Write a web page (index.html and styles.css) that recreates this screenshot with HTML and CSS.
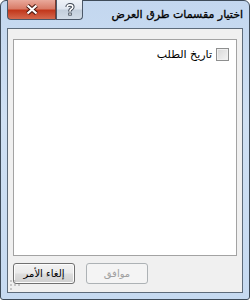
FILE: index.html
```html
<!DOCTYPE html>
<html lang="ar" dir="rtl">
<head>
    <meta charset="UTF-8">
    <title>اختيار مقسمات طرق العرض</title>
    <link rel="stylesheet" href="styles.css">
</head>
<body>
    <div class="window">
        <div class="titlebar">
            <div class="title">اختيار مقسمات طرق العرض</div>
            <div class="caption-buttons">
                <div class="cap-btn help">
                    <svg width="10" height="13" viewBox="0 0 10 13">
                        <path d="M2.2 4 C2.2 1.2 7.8 1.2 7.8 4 C7.8 6 5 6 5 7.8 L5 8.6" fill="none" stroke="#3d4652" stroke-width="3.6"/>
                        <path d="M2.2 4 C2.2 1.2 7.8 1.2 7.8 4 C7.8 6 5 6 5 7.8 L5 8.6" fill="none" stroke="#ffffff" stroke-width="1.6"/>
                        <rect x="3.3" y="9.6" width="3.4" height="3" fill="#3d4652"/>
                        <rect x="4.2" y="10.4" width="1.6" height="1.4" fill="#ffffff"/>
                    </svg>
                </div>
                <div class="cap-btn close">
                    <svg width="14" height="11" viewBox="0 0 14 11">
                        <path d="M2.5 1.5 L11.5 9.5 M11.5 1.5 L2.5 9.5" stroke="#4a1a12" stroke-width="4.2"/>
                        <path d="M2.5 1.5 L11.5 9.5 M11.5 1.5 L2.5 9.5" stroke="#ffffff" stroke-width="2.2"/>
                    </svg>
                </div>
            </div>
        </div>

        <div class="client">
            <div class="listbox">
                <label class="item">
                    <span class="checkbox"></span>
                    <span>تاريخ الطلب</span>
                </label>
            </div>
            <div class="buttons">
                <button class="btn" disabled>موافق</button>
                <button class="btn">إلغاء الأمر</button>
            </div>
            <svg class="grip" width="10" height="10" viewBox="0 0 10 10">
                <rect x="0" y="0" width="2" height="2" fill="#c7c7c7"/>
                <rect x="4" y="0" width="2" height="2" fill="#c7c7c7"/>
                <rect x="0" y="4" width="2" height="2" fill="#c7c7c7"/>
                <rect x="4" y="4" width="2" height="2" fill="#c7c7c7"/>
                <rect x="8" y="4" width="2" height="2" fill="#c7c7c7"/>
                <rect x="0" y="8" width="2" height="2" fill="#c7c7c7"/>
            </svg>
        </div>
    </div>
</body>
</html>
```

FILE: styles.css
```css
html, body {
    margin: 0;
    padding: 0;
    width: 250px;
    height: 300px;
    overflow: hidden;
    background: #ffffff;
}

body {
    font-family: "DejaVu Sans", sans-serif;
    font-size: 11px;
    color: #000000;
}

.window {
    box-sizing: border-box;
    width: 250px;
    height: 300px;
    border: 1px solid #3e4b59;
    border-radius: 6px 6px 3px 3px;
    background: linear-gradient(to bottom, #c3d7ef 0%, #cfe0f3 40%, #c6daf1 100%);
    display: flex;
    flex-direction: column;
    position: relative;
}

.titlebar {
    height: 27px;
    display: flex;
    justify-content: space-between;
    align-items: flex-start;
}

.title {
    padding: 7px 6px 0 0;
    font-size: 11px;
    color: #000000;
    white-space: nowrap;
    -webkit-text-stroke: 0.3px #000000;
}

.caption-buttons {
    display: flex;
    margin-left: 6px;
    margin-top: -1px;
}

.cap-btn {
    height: 20px;
    display: flex;
    align-items: center;
    justify-content: center;
    box-sizing: border-box;
    border: 1px solid #4b5868;
    border-top: none;
}

.help {
    width: 27px;
    border-radius: 0 0 4px 0;
    background: linear-gradient(to bottom, #eef2f7 0%, #dfe6ef 45%, #c3cfdc 55%, #d2dce7 100%);
}

.close {
    width: 49px;
    border-left: 1px solid #4b5868;
    border-right: 1px solid #7a3a2e;
    border-radius: 0 0 0 4px;
    background: linear-gradient(to bottom, #e9a99b 0%, #d97c68 45%, #c2381c 55%, #d4694e 100%);
}

.client {
    flex: 1;
    margin: 0 6px 6px 6px;
    border: 1px solid #5d6b7a;
    background: #f0f0f0;
    display: flex;
    flex-direction: column;
    padding: 10px 5px 0 5px;
    position: relative;
}

.listbox {
    box-sizing: border-box;
    height: 217px;
    border: 1px solid #a3a3a3;
    background: #ffffff;
    padding: 8px 7px 0 7px;
}

.item {
    display: flex;
    align-items: center;
    gap: 4px;
    height: 13px;
}

.checkbox {
    width: 11px;
    height: 11px;
    border: 1px solid #8e8f8f;
    background: linear-gradient(135deg, #d8d8d8 0%, #f4f4f4 100%);
    box-shadow: inset 0 0 0 1px #f0f0f0;
}

.buttons {
    display: flex;
    justify-content: flex-end;
    gap: 11px;
    margin-top: 7px;
}

.btn {
    width: 62px;
    height: 21px;
    font-family: "DejaVu Sans", sans-serif;
    font-size: 10px;
    color: #000000;
    border: 1px solid #707070;
    border-radius: 3px;
    padding: 0;
    background: linear-gradient(to bottom, #f2f2f2 0%, #ebebeb 45%, #dddddd 55%, #cfcfcf 100%);
    box-shadow: inset 0 0 0 1px #fcfcfc;
}

.btn:disabled {
    color: #a0a0a0;
    border-color: #adb2b5;
    background: #f4f4f4;
    box-shadow: none;
}

.grip {
    position: absolute;
    left: 2px;
    bottom: 2px;
}
```
